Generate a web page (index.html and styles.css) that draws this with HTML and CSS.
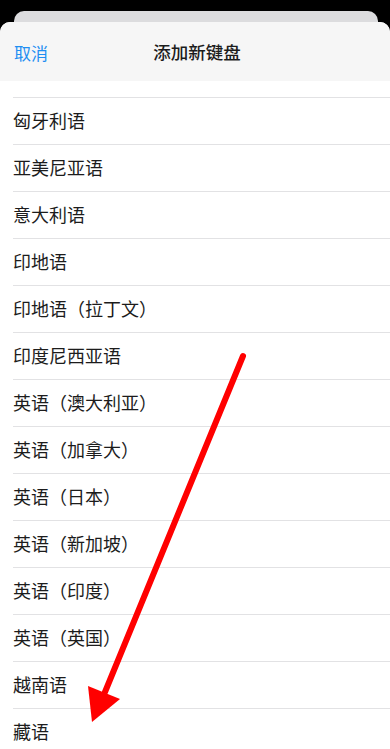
FILE: index.html
```html
<!DOCTYPE html>
<html lang="zh">
<head>
<meta charset="utf-8">
<link rel="stylesheet" href="styles.css">
</head>
<body>
<div class="screen">
  <div class="backcard"></div>
  <div class="sheet">
    <div class="header">
      <span class="cancel">取消</span>
      <span class="title">添加新键盘</span>
    </div>
    <div class="list">
      <div class="partial"><div class="partial-inner">印度尼西亚语（拉丁文）</div></div>
      <div class="row">匈牙利语</div>
      <div class="row">亚美尼亚语</div>
      <div class="row">意大利语</div>
      <div class="row">印地语</div>
      <div class="row">印地语（拉丁文）</div>
      <div class="row">印度尼西亚语</div>
      <div class="row">英语（澳大利亚）</div>
      <div class="row">英语（加拿大）</div>
      <div class="row">英语（日本）</div>
      <div class="row">英语（新加坡）</div>
      <div class="row">英语（印度）</div>
      <div class="row">英语（英国）</div>
      <div class="row">越南语</div>
      <div class="row">藏语</div>
    </div>
  </div>
  <svg class="arrow" width="390" height="749" viewBox="0 0 390 749">
    <line x1="243" y1="356" x2="105" y2="692" stroke="#ff0000" stroke-width="6" stroke-linecap="round"/>
    <polygon points="92,722 88,686 120,699" fill="#ff0000"/>
  </svg>
</div>
</body>
</html>
```
FILE: styles.css
```css
html, body {
  margin: 0;
  padding: 0;
  background: #000;
}
.screen {
  position: relative;
  width: 390px;
  height: 749px;
  overflow: hidden;
  background: #000;
  font-family: "Noto Sans CJK SC", "Noto Sans", sans-serif;
}
.backcard {
  height: 11px;
  margin: 11px 12px 0 14px;
  background: #dcdcde;
  border-radius: 10px 10px 0 0;
}
.sheet {
  background: #fff;
  border-radius: 10px 10px 0 0;
  overflow: hidden;
  height: 727px;
}
.header {
  position: relative;
  height: 59px;
  background: #f6f6f6;
  display: flex;
  align-items: center;
  justify-content: center;
}
.cancel {
  position: absolute;
  left: 14px;
  top: 50%;
  transform: translateY(-50%);
  font-size: 17px;
  color: #1f8ff2;
}
.title {
  font-size: 17.5px;
  font-weight: 500;
  color: #1c1c1c;
  padding-left: 4px;
}
.list {
  background: #fff;
}
.partial {
  height: 16px;
  overflow: hidden;
  margin-left: 13px;
  border-bottom: 1px solid #e2e2e4;
}
.partial-inner {
  margin-top: -33px;
  height: 47px;
  line-height: 47px;
  font-size: 18px;
  color: #666;
}
.row {
  margin-left: 13px;
  height: 46px;
  line-height: 45px;
  font-size: 18px;
  color: #1c1c1c;
  border-bottom: 1px solid #e2e2e4;
}
.arrow {
  position: absolute;
  left: 0;
  top: 0;
}
```
